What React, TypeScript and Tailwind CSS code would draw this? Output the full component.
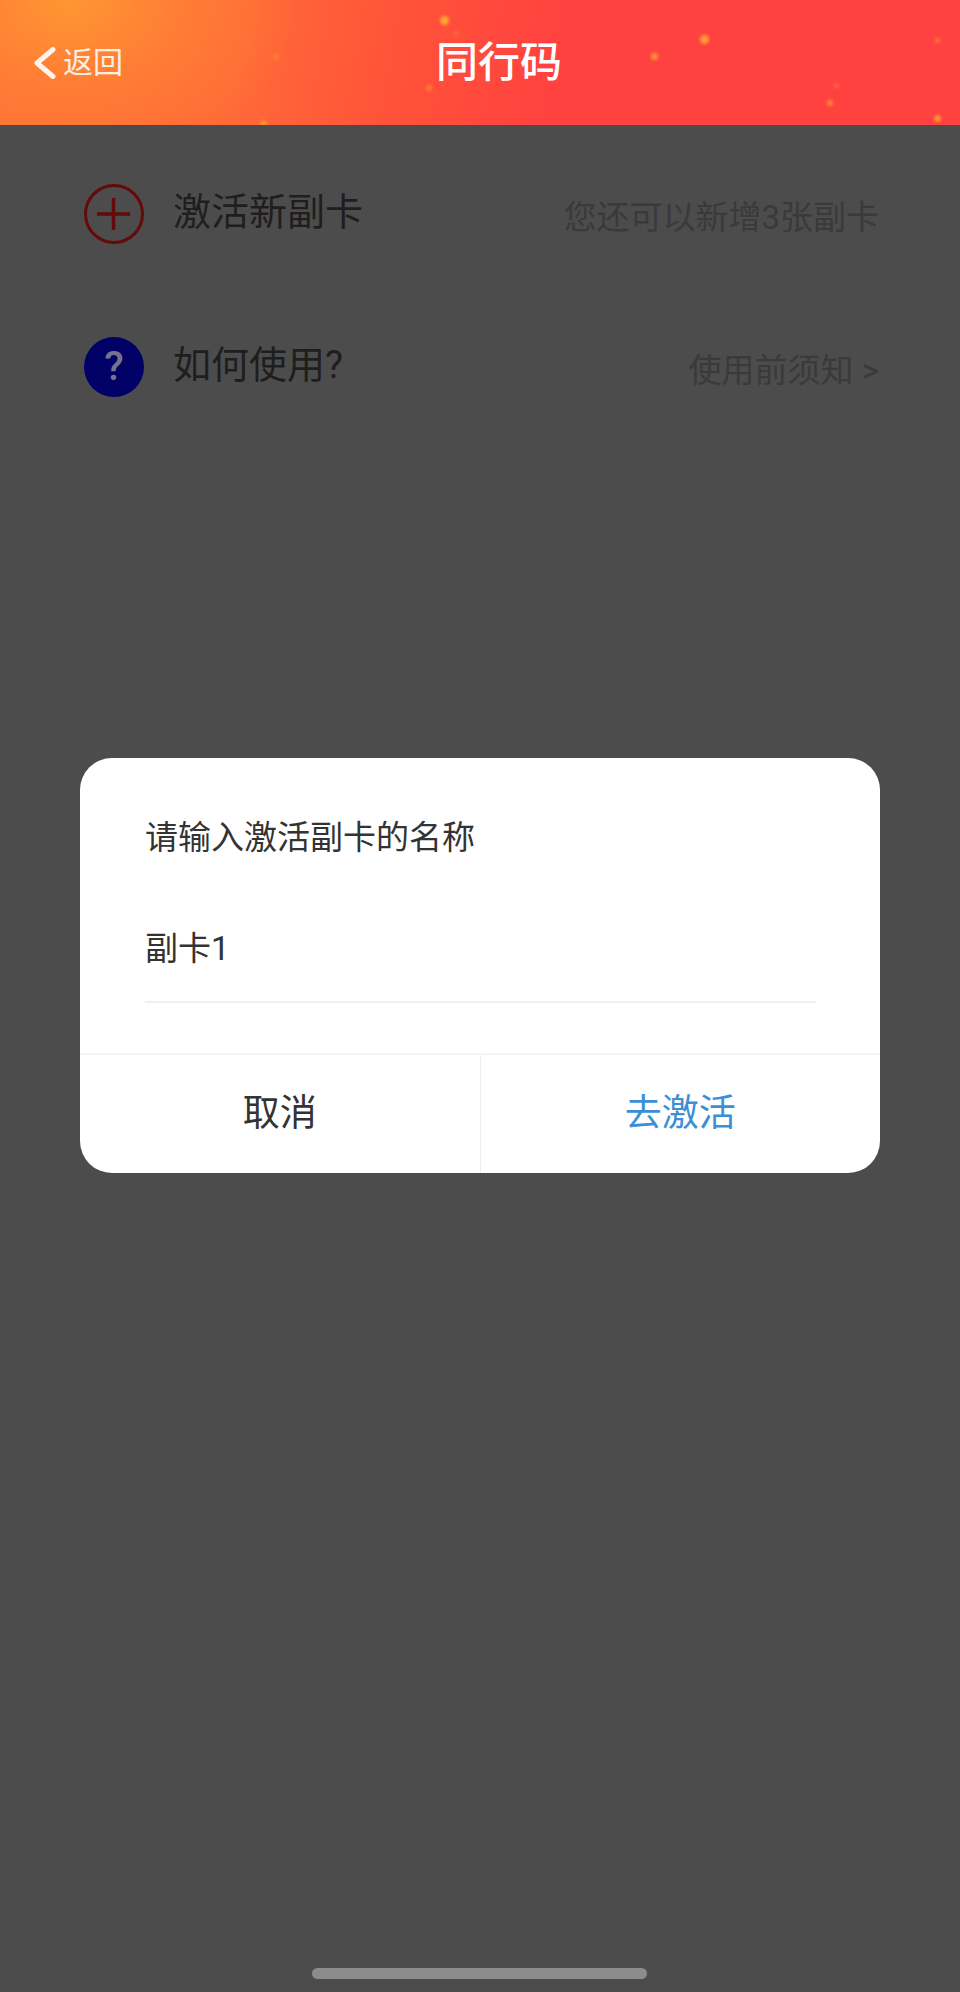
const FONT = "font-['Roboto','Noto_Sans_CJK_SC',sans-serif]";

// sparkles scattered over the header banner: [left, top, size, opacity]
const SPARKLES: [number, number, number, number][] = [
  [444, 20, 9, 1],
  [704, 39, 9, 0.9],
  [654, 56, 7, 0.8],
  [276, 57, 6, 0.35],
  [429, 88, 6, 0.5],
  [937, 40, 5, 0.5],
  [830, 103, 6, 0.7],
  [937, 118, 7, 0.8],
  [263, 123, 7, 0.6],
  [836, 85, 5, 0.35],
  [456, 34, 6, 0.25],
];

function Header() {
  return (
    <header className="relative flex h-[125px] items-center justify-center overflow-hidden bg-[radial-gradient(ellipse_230px_170px_at_70px_0px,#ff9633_0%,rgba(255,130,52,0.75)_50%,rgba(255,110,56,0)_100%),linear-gradient(100deg,#ff7038_0%,#ff6a38_25%,#ff5239_42%,#ff4240_58%,#ff4240_100%)]">
      {SPARKLES.map(([left, top, size, opacity], i) => (
        <span
          key={i}
          className="absolute rounded-full bg-[#ffa830] blur-[1.5px]"
          style={{ left: left - size / 2, top: top - size / 2, width: size, height: size, opacity }}
        />
      ))}
      <div className="absolute left-[33px] top-[47px] flex items-center gap-[7px]">
        <svg width="23" height="32" viewBox="0 0 23 32" fill="none">
          <path d="M20 2.5 L4 16 L20 29.5" stroke="#fff3ea" strokeWidth="5" strokeLinecap="round" strokeLinejoin="round" />
        </svg>
        <span className="text-[30px] leading-[32px] text-[#fdeee4]">返回</span>
      </div>
      <h1 className="ml-[38px] text-[42px] leading-none font-medium text-white">同行码</h1>
    </header>
  );
}

function Row({ icon, label, hint }: { icon: React.ReactNode; label: string; hint: string }) {
  return (
    <div className="flex h-[153px] items-center pl-[84px] pr-[81px]">
      {icon}
      <span className="ml-[29px] mb-[3px] text-[38px] leading-none text-[#1e1e1e]">{label}</span>
      <span className="ml-auto mt-[8px] text-[33px] leading-none text-[#3a3a3a]">{hint}</span>
    </div>
  );
}

function Dialog() {
  return (
    <div className="absolute left-[80px] top-[758px] w-[800px] overflow-hidden rounded-[32px] bg-white">
      <div className="pl-[65px] pr-[64px]">
        <p className="pt-[60px] text-[33px] leading-[40px] text-[#333333]">请输入激活副卡的名称</p>
        <input
          defaultValue="副卡1"
          className="mt-[57px] block h-[88px] w-full border-b-2 border-[#f0f0f0] bg-transparent pb-[24px] text-[33px] leading-[40px] text-[#333333] outline-none"
        />
      </div>
      <div className="mt-[50px] flex h-[120px] border-t-2 border-[#f5f5f5]">
        <button type="button" className="flex-1 border-r border-[#eeeeee] text-[37px] text-[#333333]">
          取消
        </button>
        <button type="button" className="flex-1 text-[37px] text-[#3a8fd6]">
          去激活
        </button>
      </div>
    </div>
  );
}

export default function App() {
  return (
    <div className={`relative h-[1992px] w-[960px] overflow-hidden bg-[#4c4c4c] ${FONT}`}>
      <Header />

      <main className="pt-[12px]">
        <Row
          label="激活新副卡"
          hint="您还可以新增3张副卡"
          icon={
            <svg width="60" height="60" viewBox="0 0 60 60" fill="none" className="shrink-0">
              <circle cx="30" cy="30" r="28.5" stroke="#640a0a" strokeWidth="3" />
              <path d="M13 30 H46 M29.5 14 V46" stroke="#640a0a" strokeWidth="3.5" />
            </svg>
          }
        />
        <Row
          label="如何使用?"
          hint="使用前须知 >"
          icon={
            <span className="flex size-[60px] shrink-0 items-center justify-center rounded-full bg-[#000066] text-[40px] leading-none font-medium text-[#74748f]">
              ?
            </span>
          }
        />
      </main>

      <Dialog />

      {/* home indicator */}
      <div className="absolute bottom-[13px] left-[312px] h-[11px] w-[335px] rounded-full bg-[#8c8c8c]" />
    </div>
  );
}
